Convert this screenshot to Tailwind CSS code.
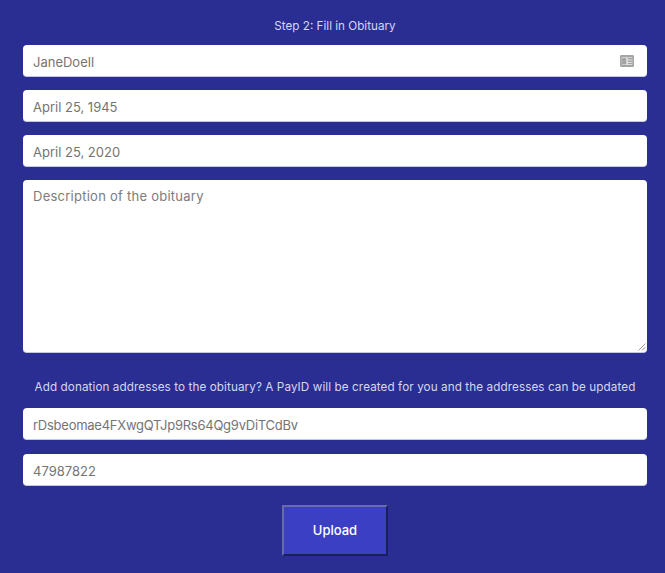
<!DOCTYPE html>
<html lang="en">
<head>
    <meta charset="UTF-8">
    <meta name="viewport" content="width=device-width, initial-scale=1.0">
    <title>Fill in Obituary</title>
    <script src="https://cdn.jsdelivr.net/npm/@tailwindcss/browser@4"></script>
</head>
<body class="bg-[#2a2e93] min-h-screen overflow-hidden font-['Inter',sans-serif]">
    <form class="flex flex-col px-[23px] pr-[18px] pt-[18px]">
        <h3 class="text-center text-[11.7px] leading-[15px] pt-[1px] text-[#d5d7ee] mb-[11px]">Step 2: Fill in Obituary</h3>

        <!-- Name -->
        <div class="relative mb-[13px]">
            <input type="text" value="JaneDoell" class="block w-full h-[32px] pl-[10px] pr-[10px] pt-[2px] rounded-[4px] bg-white border-b border-[#c5c7e6] text-[13px] text-[#747474] outline-none">
            <svg class="absolute right-[13px] top-[10px] w-[14px] h-[12px]" viewBox="0 0 14 12" fill="#a4a4a4">
                <path fill-rule="evenodd" d="M1.500 0h11C13.400 0 14 .6 14 1.500v9c0 .9-.6 1.500-1.500 1.500h-11C.6 12 0 11.400 0 10.500v-9C0 .6.600 0 1.500 0zM1.800 2.500v7.300h10.400V2.500z"/>
                <rect x="2" y="3" width="4.500" height="6.500" rx="1"/>
                <rect x="7.500" y="3" width="4.500" height="1.600"/>
                <rect x="7.500" y="5.300" width="4.500" height="1.600"/>
                <rect x="7.500" y="7.600" width="4.500" height="1.600"/>
            </svg>
        </div>

        <input type="text" value="April 25, 1945" class="block w-full h-[32px] px-[10px] pt-[2px] mb-[13px] rounded-[4px] bg-white border-b border-[#c5c7e6] text-[13px] text-[#747474] outline-none">
        <input type="text" value="April 25, 2020" class="block w-full h-[32px] px-[10px] pt-[2px] mb-[13px] rounded-[4px] bg-white border-b border-[#c5c7e6] text-[13px] text-[#747474] outline-none">

        <!-- Description -->
        <div class="relative">
            <textarea placeholder="Description of the obituary" class="block w-full h-[173px] px-[10px] py-[8px] rounded-[4px] bg-white border-b border-[#c5c7e6] text-[13px] leading-[17px] tracking-[0.25px] text-[#747474] placeholder:text-[#7c7c7c] outline-none resize-none"></textarea>
            <svg class="absolute right-[1px] bottom-[2px] w-[8px] h-[8px]" viewBox="0 0 8 8" stroke="#9a9a9a" fill="none">
                <path d="M0.500 7.500L7.500 0.500M4 7.500L7.500 4"/>
            </svg>
        </div>

        <p class="text-center text-[11.7px] leading-[15px] tracking-[0.09px] text-[#d5d7ee] mt-[27px] mb-[13px] whitespace-nowrap">Add donation addresses to the obituary? A PayID will be created for you and the addresses can be updated</p>

        <input type="text" value="rDsbeomae4FXwgQTJp9Rs64Qg9vDiTCdBv" class="block w-full h-[32px] px-[10px] pt-[2px] mb-[14px] rounded-[4px] bg-white border-b border-[#c5c7e6] text-[13px] tracking-[-0.25px] text-[#747474] outline-none">
        <input type="text" value="47987822" class="block w-full h-[32px] px-[10px] pt-[2px] rounded-[4px] bg-white border-b border-[#c5c7e6] text-[13px] text-[#747474] outline-none">

        <button type="button" class="self-center w-[106px] h-[51px] mt-[19px] bg-[#3a3fc4] border-2 border-[#676cab] border-r-[#1c1f5e] border-b-[#1c1f5e] text-white text-[13px] font-medium">Upload</button>
    </form>
</body>
</html>
